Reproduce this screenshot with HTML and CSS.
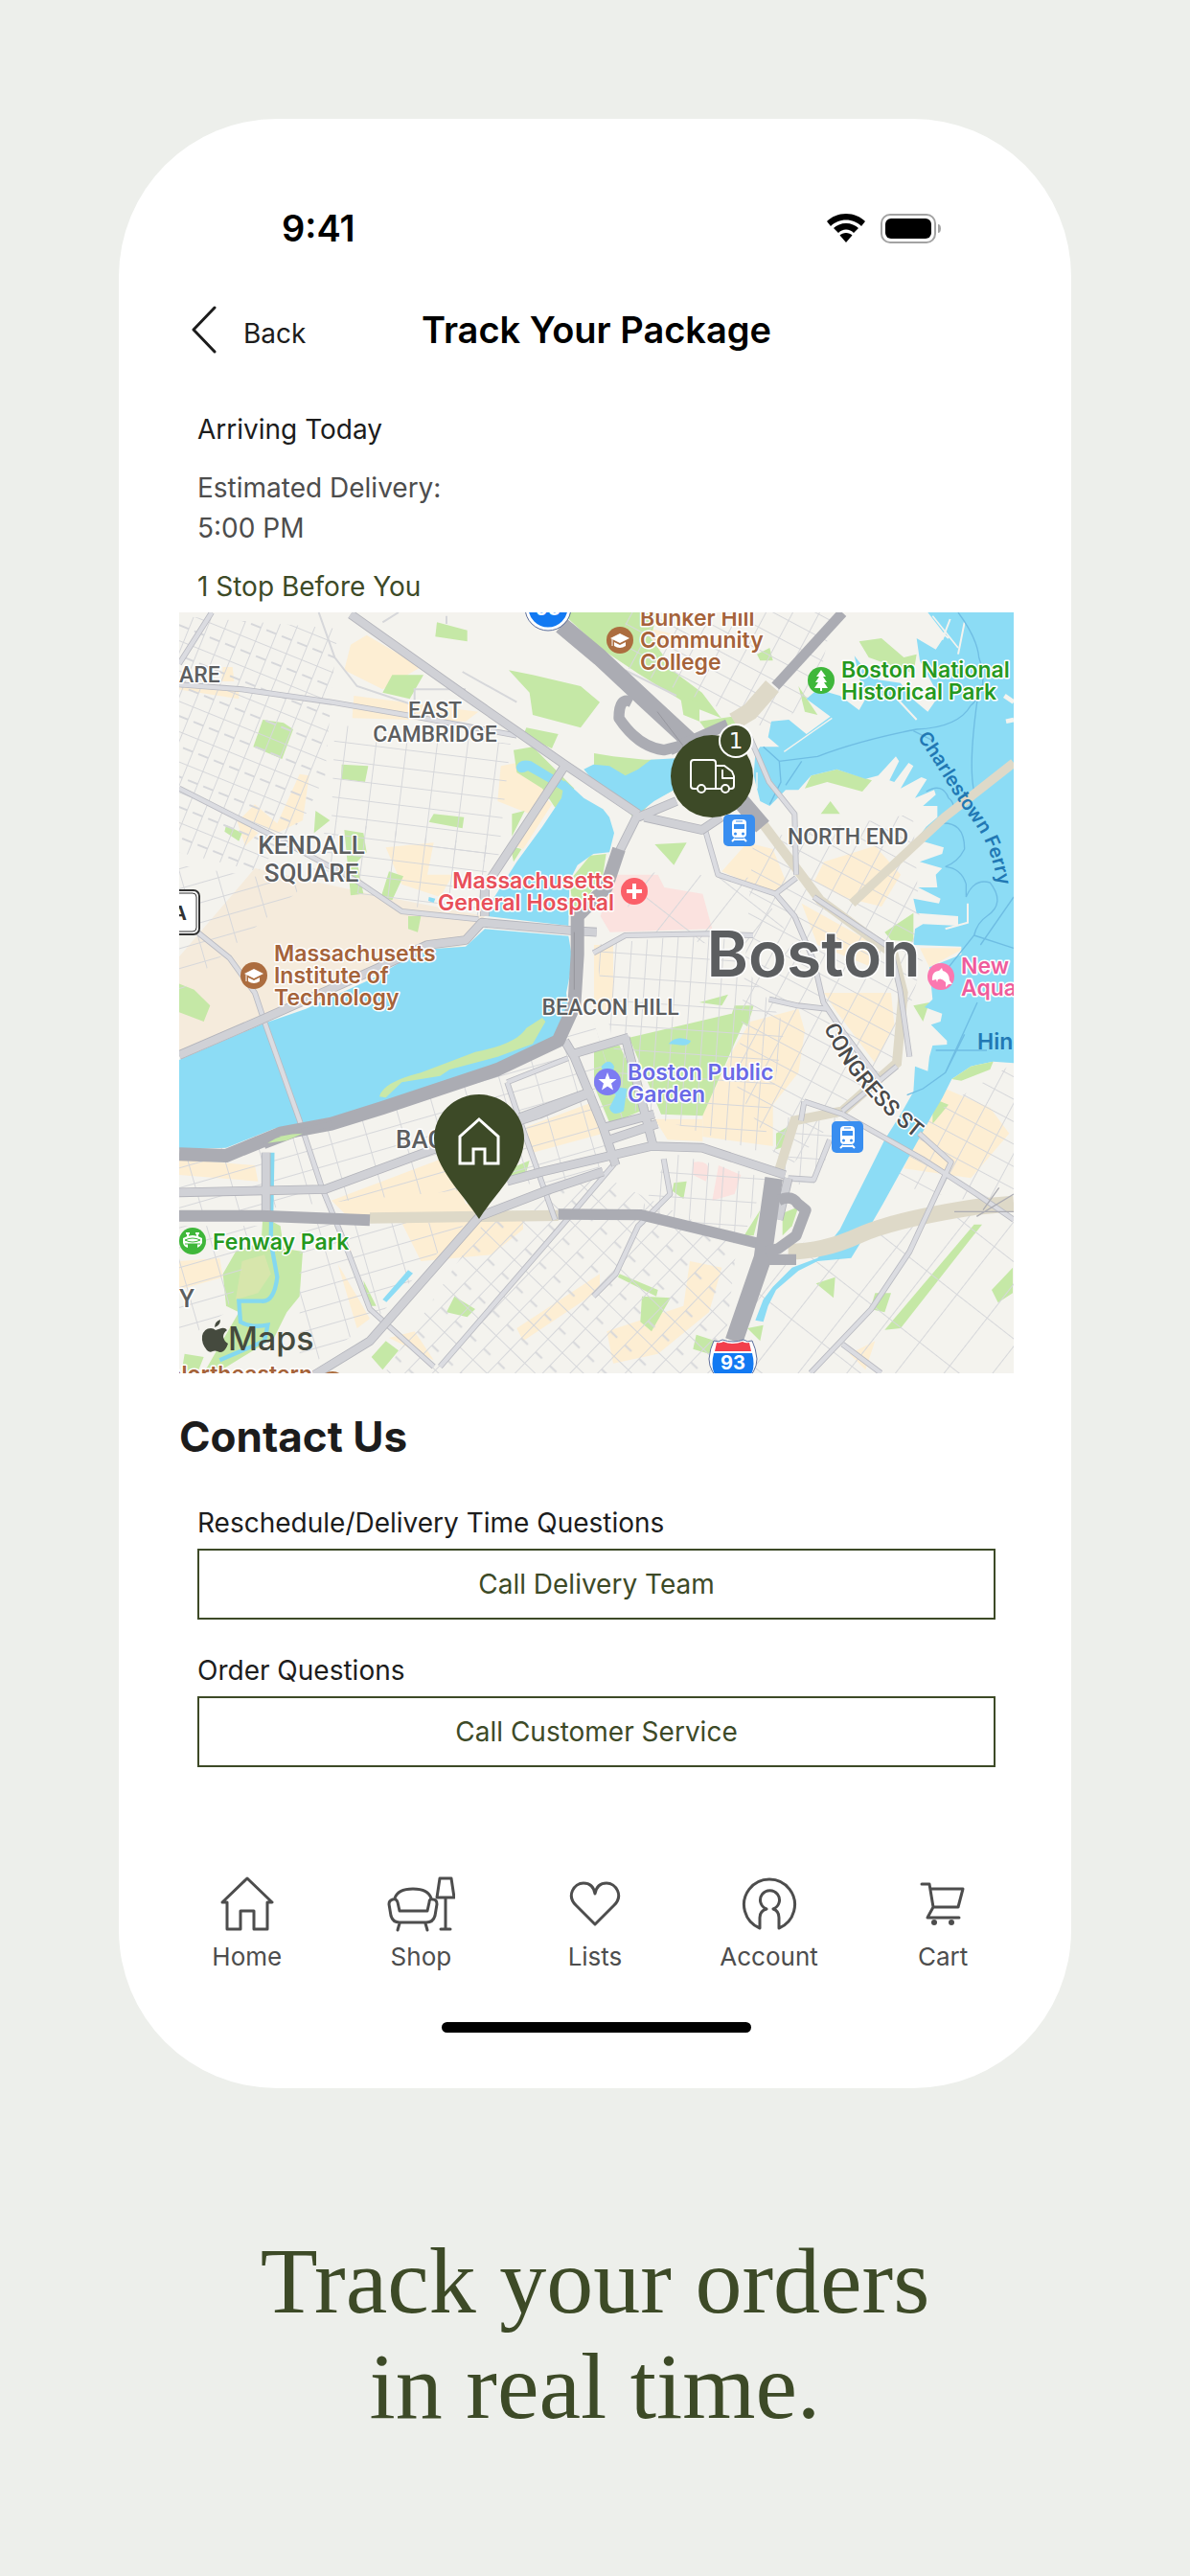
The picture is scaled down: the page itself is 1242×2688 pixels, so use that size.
FILE: index.html
```html
<!DOCTYPE html>
<html lang="en">
<head>
    <meta charset="UTF-8">
    <meta name="viewport" content="width=device-width, initial-scale=1">
    <title>Track Your Package</title>
    <link rel="stylesheet" href="styles.css">
</head>
<body>
    <div class="phone">
        <div class="status">
            <span class="time">9:41</span>
            <div class="status-icons">
                <svg width="40" height="30" viewBox="0 0 40 30">
                    <path d="M20 0C12 0 5 3 0 8l4 5c4-4 10-6.500 16-6.500S32 9 36 13l4-5C35 3 28 0 20 0z"/>
                    <path d="M20 10c-5 0-10 2-13 5l5 5c2-2 5-3.500 8-3.500s6 1.500 8 3.500l5-5c-3-3-8-5-13-5z"/>
                    <path d="M20 20c-2.500 0-5 1-6.500 2.500L20 30l6.500-7.500C25 21 22.500 20 20 20z"/>
                </svg>
                <svg width="64" height="31" viewBox="0 0 64 31">
                    <rect x="1" y="1" width="56" height="29" rx="9" fill="#fff" stroke="#a3a3a3" stroke-width="2"/>
                    <rect x="5" y="5" width="48" height="21" rx="6"/>
                    <path d="M60 11c2 0 3 2 3 4.500S62 20 60 20z" fill="#a3a3a3"/>
                </svg>
            </div>
        </div>

        <header class="header">
            <a class="back" href="#">
                <svg width="26" height="50" viewBox="0 0 26 50"><path d="M24 2L2 25l22 23" fill="none" stroke="#1c1c1c" stroke-width="3" stroke-linecap="round" stroke-linejoin="round"/></svg>
                <span>Back</span>
            </a>
            <h1>Track Your Package</h1>
        </header>

        <div class="delivery">
            <p class="arriving">Arriving Today</p>
            <p class="estimate">Estimated Delivery:<br>5:00 PM</p>
            <p class="stops">1 Stop Before You</p>
        </div>

        <svg class="map" viewBox="0 0 871 794">
            <defs>
                <pattern id="gridA" width="95" height="58" patternUnits="userSpaceOnUse" patternTransform="rotate(7)"><path d="M0 0H95M0 0V58" class="street"/></pattern>
                <pattern id="gridB" width="52" height="88" patternUnits="userSpaceOnUse" patternTransform="rotate(22)"><path d="M0 0H52M0 0V88M20 44H52" class="street"/></pattern>
                <pattern id="gridC" width="112" height="60" patternUnits="userSpaceOnUse" patternTransform="rotate(-16)"><path d="M0 0H112M0 0V60" class="street"/></pattern>
                <pattern id="gridD" width="105" height="62" patternUnits="userSpaceOnUse" patternTransform="rotate(-46)"><path d="M0 0H105M0 0V62M50 0V30" class="street"/></pattern>
                <pattern id="gridE" width="74" height="62" patternUnits="userSpaceOnUse" patternTransform="rotate(28)"><path d="M0 0H74M0 0V62" class="street"/></pattern>
                <pattern id="gridF" width="190" height="120" patternUnits="userSpaceOnUse" patternTransform="rotate(-52)"><path d="M0 0H190M0 0V120" class="street"/></pattern>
                <pattern id="gridG" width="48" height="75" patternUnits="userSpaceOnUse" patternTransform="rotate(4)"><path d="M0 0H48M0 0V75" class="street"/></pattern>
                <path id="ferry" d="M770 130C797 168 808 192 830 220C845 241 851 263 857 298"/>
                <path id="congress" d="M673 433C688 470 724 516 775 554"/>
                <g id="cap">
                    <circle r="14" fill="#ac6d3f"/>
                    <path d="M-10 -2L0 -7 10 -2 0 3z" fill="#fff"/>
                    <path d="M-6 2v4q6 4 12 0V2L0 5z" fill="#fff"/>
                    <path d="M-8 -1v7" stroke="#fff" fill="none"/>
                </g>
                <g id="train">
                    <rect width="33" height="33" rx="5" fill="#398ef0"/>
                    <rect x="9" y="5" width="15" height="19" rx="4" fill="#fff"/>
                    <path d="M11 10h11v5H11z" fill="#398ef0"/>
                    <path d="M13 7h7" stroke="#398ef0"/>
                    <circle cx="12.500" cy="20" r="1.500" fill="#398ef0"/>
                    <circle cx="20.500" cy="20" r="1.500" fill="#398ef0"/>
                    <path d="M12 25l-3 3M21 25l3 3M12 26h9" stroke="#fff" stroke-width="2"/>
                </g>
            </defs>

            <g transform="translate(-1 -3) scale(0.333333)">
                <rect x="0" y="0" width="2630" height="2410" fill="#f4f3ee"/>

                <!-- built-up areas -->
                <g class="built">
                    <path d="M590 80L760 180 640 250 520 190 540 110z"/>
                    <path d="M0 225L190 250V280L0 250zM140 180L170 180 175 225 135 225z"/>
                    <path d="M550 270L940 320 900 350 545 340z"/>
                    <path d="M1010 490L1060 480 1160 540 1100 640 1000 600z"/>
                    <path d="M1150 590L1170 610 1080 750 1055 740z"/>
                    <path d="M380 515L410 520 390 660 310 700 200 650 240 610 310 670z"/>
                    <path d="M650 745L800 730 780 830 860 830 820 900 700 860z"/>
                    <path d="M0 1090L240 810 600 890 960 960 900 1050 600 1130 0 1400z" fill="#f5ebdc"/>
                    <path d="M180 650L250 700 210 740z"/>
                    <path d="M0 1720L240 1740 250 1790 0 1770z"/>
                    <path d="M0 2040L130 2030 140 2090 0 2130z"/>
                    <path d="M480 1850L850 1710 900 1860 1080 1900 1080 1940 980 2020 760 2040 700 1920 520 1890z"/>
                    <path d="M1090 1620L1290 1545 1330 1640 1110 1700z"/>
                    <path d="M500 2050L560 2150 600 2220 560 2250z"/>
                    <path d="M660 2280L740 2260 800 2350z"/>
                    <path d="M1060 2250L1320 2080V2130L1080 2290z"/>
                </g>
                <g class="built" transform="translate(1302 0)">
                    <path d="M480 730L560 750 600 850 560 890 400 820z"/>
                    <path d="M720 790L880 740 960 830 900 930 780 900 690 850z"/>
                    <path d="M0 1050H60V1250L0 1260zM650 920L900 1060 870 1120 700 1050z"/>
                    <path d="M490 1290L640 1250 660 1320 640 1450 560 1550 560 1680 340 1650 340 1580 440 1370z"/>
                    <path d="M720 1200H930L940 1300 880 1420 760 1260z"/>
                    <path d="M1100 1500L1240 1560 1300 1640 1180 1780 970 1750 1020 1630z"/>
                    <path d="M190 1595H340V1665L230 1660z"/>
                    <path d="M40 2260L280 2180 300 2040 400 2060 360 2200 200 2330 60 2360z"/>
                    <path d="M1020 1060L1160 1060 1050 1120zM140 50L300 90 200 130z"/>
                    <path d="M800 2330L880 2290 850 2380z"/>
                </g>
                <g fill="#fbe2df" transform="translate(1302 0)">
                    <path d="M60 830L200 830 220 870 340 890 370 1000 50 1010 20 960z"/>
                    <path d="M310 1730Q380 1720 350 1790L310 1770zM390 1740L460 1770 440 1830 370 1850z"/>
                </g>

                <!-- parks -->
                <g class="park">
                    <path d="M265 345L330 355 360 375 325 468 235 430z"/>
                    <path d="M512 485L595 490 585 540 510 530z"/>
                    <path d="M670 205H768L725 280 640 260z"/>
                    <path d="M1035 190L1110 205 1260 240 1320 290 1260 370 1110 330 1100 260z"/>
                    <path d="M1090 370L1190 390 1170 435 1080 395z"/>
                    <path d="M1050 440L1110 430 1240 560 1180 620 1140 560 1060 510z"/>
                    <path d="M810 40L905 65V100L805 85z"/>
                    <path d="M1200 9H1500L1480 90 1560 200 1640 260 1700 340 1600 300 1440 200 1320 120z"/>
                    <path d="M800 640L895 650 890 685 785 665z"/>
                    <path d="M430 630L475 660 425 700zM520 690L580 700 590 760 560 790 580 890 540 895z"/>
                    <path d="M660 820L705 835 670 910 635 900zM720 960L760 960 750 1010 720 1000z"/>
                    <path d="M150 675L200 700 190 725 145 695zM0 1170L50 1190 100 1240 80 1290 0 1260z"/>
                    <path d="M1045 640L1085 630 1045 710zM1040 740L1075 750 1050 790z"/>
                    <path d="M1225 850L1290 770 1340 765 1330 830 1240 960z"/>
                    <path d="M1180 1270L1210 1290 1160 1370 1010 1420 1080 1360z"/>
                    <path d="M265 1900L320 1930 330 2000 390 2010 380 2150 340 2200 300 2280 120 2390 80 2390 190 2200 150 2180 140 2080 180 2010 260 1980z"/>
                    <path d="M20 2330L80 2340 60 2390 10 2390zM580 2100L620 2180 590 2180z"/>
                    <path d="M865 2150L930 2190 905 2215 840 2200zM650 2290L690 2320 640 2380 605 2340z"/>
                    <path d="M1040 1750L1100 1725 1090 1760 1030 1785z"/>
                </g>
                <path d="M200 2040L270 2020 290 2080 250 2140 180 2160z" fill="#d7e6ac"/>
                <g class="park" transform="translate(1302 0)">
                    <path d="M110 1340L430 1265 470 1290 340 1585 210 1580z"/>
                    <path d="M0 1370L80 1365 170 1560 50 1610 0 1490z"/>
                    <path d="M440 1240L500 1240 480 1305 430 1270zM330 1230L420 1205 400 1240z"/>
                    <path d="M680 520L760 500 870 535 840 570 730 540 660 560z"/>
                    <path d="M740 600L770 640 710 640zM910 1010L1000 950V1040L930 1035z"/>
                    <path d="M0 450L60 460 160 470 250 470 260 560 180 600 130 660 0 500z"/>
                    <path d="M190 735L290 730 250 800zM510 140L550 120 560 160 520 160z"/>
                    <path d="M270 270L330 290 330 350 280 330zM330 350L470 330 440 380 360 390z"/>
                    <path d="M830 100L900 90 970 150 1010 140 1000 200 860 150z"/>
                    <path d="M660 320L640 240 700 330z"/>
                    <path d="M570 1640L640 1600 600 1680 570 1690zM470 1960L520 1880 500 1960z"/>
                    <path d="M590 1890L640 1870 620 1930 590 1960z"/>
                    <path d="M250 1795L290 1790 280 1845 245 1820zM150 2150L240 2155 180 2260 145 2230z"/>
                    <path d="M320 2270L380 2290 360 2330 310 2315zM80 2080L200 2130 195 2150 75 2090z"/>
                    <path d="M695 2110L755 2090 750 2155zM880 2140L930 2140 910 2200 865 2190z"/>
                    <path d="M910 2255L1190 1925 1215 1925 960 2250z"/>
                    <path d="M1311 2060L1245 2130 1265 2170 1311 2140zM480 2250L530 2240 520 2290z"/>
                    <path d="M1000 1240L1050 1230 1030 1290zM1060 1530L1110 1550 1060 1610z"/>
                </g>

                <!-- side streets -->
                <path d="M490 360L1040 420 1000 800 480 660z" fill="url(#gridA)"/>
                <path d="M0 20L500 60 480 260 460 520 400 640 250 820 0 760z" fill="url(#gridB)"/>
                <path d="M480 660L980 740 940 960 600 910 400 800z" fill="url(#gridA)"/>
                <path d="M0 800L400 860 0 1200z" fill="url(#gridC)"/>
                <path d="M0 1720L1300 1290 1400 1600 1300 1780 0 1900z" fill="url(#gridC)"/>
                <path d="M0 1930L250 1930 150 2200 0 2300z" fill="url(#gridC)"/>
                <path d="M380 1920L900 1920 620 2220 380 2390z" fill="url(#gridC)"/>
                <path d="M950 1930L1300 1760 1750 1980 1700 2400 640 2400z" fill="url(#gridD)"/>
                <path d="M1300 1050L1700 1010 1900 1300 1830 1700 1400 1560z" fill="url(#gridG)"/>
                <path d="M1800 720L2300 640 2330 1100 2250 1400 1900 1760 1750 1500z" fill="url(#gridE)"/>
                <path d="M1420 820L1800 840 1960 1100 1400 1000z" fill="url(#gridF)"/>
                <path d="M1400 9L2050 9 2000 260 1860 380 1400 180z" fill="url(#gridE)"/>
                <path d="M1880 1590H2090L1990 1800H1880z" fill="url(#gridG)"/>
                <path d="M2330 1600L2616 1420V1880L2240 1800z" fill="url(#gridE)"/>
                <path d="M1990 1950L2616 1880V2400H1700L1760 2180z" fill="url(#gridF)"/>
                <path d="M1540 1700L1840 1780 1760 1990 1440 1900z" fill="url(#gridG)"/>
                <path d="M440 9L490 150 560 240 740 300M690 9L640 40M840 20V45M890 195L1060 290M740 290V250H900M780 300V345M1560 270L1400 190" class="street"/>

                <!-- water -->
                <g class="water">
                    <path d="M1210 535L1270 590 1330 625 1350 650 1365 700 1350 760 1300 765 1250 800 1225 850 1222 990 965 960 990 900 1060 790 1140 680 1200 590z"/>
                    <path d="M1270 500L1300 485 1350 490 1400 520 1440 500 1480 470 1570 465 1600 520 1560 560 1490 600 1440 640 1400 600 1320 560z"/>
                    <path d="M1058 495Q1065 465 1105 475L1220 545 1210 570 1095 505Q1065 520 1058 495z"/>
                    <path d="M3 1410L270 1295 400 1250 620 1150 760 1065 900 1055 960 1000 1222 1022 1235 1100 1215 1200 1225 1290 1165 1365 1000 1425 640 1545 480 1590 300 1625 150 1685 3 1690z"/>
                    <path d="M720 2068L735 2078 652 2168 640 2160zM785 900L805 905 800 918 783 912z"/>
                    <path d="M1535 1360Q1560 1330 1605 1350 1600 1370 1560 1362zM1325 1430Q1350 1400 1365 1430L1355 1490 1405 1500 1395 1570Q1360 1590 1350 1560L1370 1520 1340 1490z"/>
                </g>
                <path d="M295 1700L290 1980 310 2090Q300 2170 260 2165L190 2165 195 2230Q230 2250 280 2240L270 2290 130 2350" fill="none" stroke="#84d8f0" stroke-width="13"/>
                <path d="M630 1525Q640 1480 760 1450L930 1385Q1060 1360 1090 1310L1140 1278 1150 1290 1110 1360 1000 1400 850 1440 820 1460 700 1480 650 1528z" fill="#c9e8a8"/>
                <g class="water" transform="translate(1302 0)">
                    <path d="M1045 9L1100 80 1070 125 1010 90 1020 160 1080 270 1045 320 985 270 960 230 890 220 835 170 815 145 835 230 850 280 830 315 770 270 700 250 665 280 740 335 665 390 610 345 555 350 545 400 580 430 520 430 505 450 500 520 520 600 550 615 600 565 640 565 680 520 760 500 850 530 890 520 945 460 955 475 925 535 940 540 985 480 1000 490 960 560 1025 525 1042 532 1005 590 1065 565 1070 580 1030 615 1075 615 1075 650 1040 680 1010 720 1095 745 1090 765 1020 790 1090 810 1070 830 1075 870 1015 870 1085 905 1080 920 1000 905 1010 950 1140 960 1140 990 1030 985 1005 1000 1000 1050 1150 1055 1150 1080 1050 1120 1060 1220 1035 1245 1090 1265 1085 1290 1055 1300 1105 1350 1105 1362 1060 1365 1050 1400 1045 1445 1005 1430 1000 1510 960 1580 910 1660 860 1760 790 1900 770 1940 700 2030 620 2060 560 2120 530 2160 505 2225 530 2230 545 2180 570 2130 640 2070 700 2040 805 2030 830 1990 905 1860 960 1760 1010 1670 1060 1580 1090 1530 1120 1470 1180 1430 1250 1415 1314 1420V9z"/>
                </g>
                <path d="M1120 1470L1180 1430 1250 1415 1240 1440 1150 1475z" fill="#c5e8a6" transform="translate(1302 0)"/>
                <!-- piers -->
                <g fill="none" stroke="#f4f3ee" transform="translate(1302 0)">
                    <path d="M1040 30L1110 90M1060 20L1140 120" stroke-width="5"/>
                    <path d="M1115 30L1090 95M1160 40L1140 140M940 270L1010 345M1170 920V980L1100 1000" stroke-width="6"/>
                    <path d="M595 445L745 340M510 510V560M980 1375L960 1450" stroke-width="4"/>
                    <path d="M1290 350L1314 345M1285 270L1314 290" stroke-width="14"/>
                </g>
                <!-- ferry routes -->
                <g fill="none" stroke="#6fbde3" stroke-width="4" transform="translate(1302 0)">
                    <path d="M1140 9Q1200 90 1205 150 1240 250 1180 300 1140 370 1010 375 830 410 700 460L580 475 530 430M580 475L585 540 550 610M650 475L600 550M1205 250Q1170 480 1190 570"/>
                    <path d="M1000 380L1060 410M1040 570Q1090 540 1110 590 1150 620 1080 670 1160 660 1160 750 1140 790 1100 805 1150 810 1165 860L1165 900Q1190 840 1240 855 1290 920 1230 960 1200 980 1190 1020L1110 1120M1210 1050L1314 900M1190 1020L1314 1060M1200 1230L1100 1450 1030 1500 980 1520M1070 1380H1230M1100 1450L1160 1330"/>
                </g>

                <!-- tunnels -->
                <g fill="none" stroke="#ded9c8" stroke-width="34">
                    <path d="M600 1905L943 1900 1190 1897"/>
                    <path d="M1860 240L1790 320 1740 350" stroke-width="55"/>
                    <path d="M1830 670L1920 790 2010 910 2240 1080 2270 1200 2250 1420 2080 1570 1930 1600 1880 1760" stroke-width="30"/>
                    <path d="M2110 920L2400 650 2616 480" stroke-width="28"/>
                    <path d="M1910 2010Q2020 2010 2130 1960T2500 1870L2616 1860" stroke-width="50"/>
                </g>

                <!-- secondary roads -->
                <g class="road-edge">
                    <path d="M3 235L200 250 480 290 740 335 1060 395M3 560L280 700 560 850 700 945 940 970"/>
                    <path d="M105 9L3 170M60 1010L160 1090 240 1200 270 1290 380 1600 450 1810 520 1980 600 2190 800 2370"/>
                    <path d="M1790 400L1850 540 1930 640 1935 830M1990 900L2230 1060 2260 1190 2290 1400M1300 1075L1400 1020 1660 1015 1800 1020M1650 690L1690 830 1870 890 1935 840"/>
                    <path d="M1870 890L1930 960 1990 1100 2020 1230 2080 1320 2200 1480M1960 1540L2080 1580 2330 1720 2500 1830 2616 1910M1960 1540L1950 1600M2080 1570L2250 1430M2320 1640L2420 1730 2290 2010 2170 2190 1980 2390"/>
                    <path d="M1850 1220L1940 1240 2030 1250M1910 1780L1990 1785 2040 1660M1520 1720L1540 1830 1440 1930 1370 2080 1300 2150M2080 2300L2200 2390"/>
                    <path d="M1030 1480L1070 1600 1180 1910M1030 1480L1220 1405M820 2370L1200 1930 1370 1730"/>
                </g>
                <g class="road">
                    <path d="M3 235L200 250 480 290 740 335 1060 395M3 560L280 700 560 850 700 945 940 970"/>
                    <path d="M105 9L3 170M60 1010L160 1090 240 1200 270 1290 380 1600 450 1810 520 1980 600 2190 800 2370"/>
                    <path d="M1790 400L1850 540 1930 640 1935 830M1990 900L2230 1060 2260 1190 2290 1400M1300 1075L1400 1020 1660 1015 1800 1020M1650 690L1690 830 1870 890 1935 840"/>
                    <path d="M1870 890L1930 960 1990 1100 2020 1230 2080 1320 2200 1480M1960 1540L2080 1580 2330 1720 2500 1830 2616 1910M1960 1540L1950 1600M2080 1570L2250 1430M2320 1640L2420 1730 2290 2010 2170 2190 1980 2390"/>
                    <path d="M1850 1220L1940 1240 2030 1250M1910 1780L1990 1785 2040 1660M1520 1720L1540 1830 1440 1930 1370 2080 1300 2150M2080 2300L2200 2390"/>
                    <path d="M1030 1480L1070 1600 1180 1910M1030 1480L1220 1405M820 2370L1200 1930 1370 1730"/>
                </g>

                <!-- main roads -->
                <g class="main-edge">
                    <path d="M3 1395L270 1280 620 1125 780 1050 900 1035 950 980 1230 1005 1310 1010M960 960V870L1210 490M3 1825L460 1815 800 1690 1130 1580 1300 1510"/>
                    <path d="M420 2400L600 2290 943 1900 1150 1820 1330 1760M1030 1790L1140 1760 1480 1680 1640 1685 1900 1770M1210 1350L1240 1400 1330 1620 1370 1740M1400 1340L1490 1690M1240 1390L1410 1340M1340 1620L1490 1580M1350 1660L1500 1610M1440 640L1370 780M1440 650L1560 600M1460 650L1640 690 1700 650"/>
                    <path d="M540 15L900 270 1210 485 1440 640M1070 1590L1290 1510M275 1700V1900M1880 1910L1910 1780"/>
                </g>
                <g class="main">
                    <path d="M3 1395L270 1280 620 1125 780 1050 900 1035 950 980 1230 1005 1310 1010M960 960V870L1210 490M3 1825L460 1815 800 1690 1130 1580 1300 1510"/>
                    <path d="M420 2400L600 2290 943 1900 1150 1820 1330 1760M1030 1790L1140 1760 1480 1680 1640 1685 1900 1770M1210 1350L1240 1400 1330 1620 1370 1740M1400 1340L1490 1690M1240 1390L1410 1340M1340 1620L1490 1580M1350 1660L1500 1610M1440 640L1370 780M1440 650L1560 600M1460 650L1640 690 1700 650"/>
                    <path d="M540 15L900 270 1210 485 1440 640M1070 1590L1290 1510M275 1700V1900M1880 1910L1910 1780"/>
                </g>

                <!-- highways -->
                <g class="highway">
                    <path d="M1200 50L1320 150 1470 290 1600 410 1830 680" stroke-width="54"/>
                    <path d="M2080 10L1870 240" stroke-width="32"/>
                    <path d="M1420 290Q1380 270 1380 340 1440 430 1520 440L1580 425M1540 440L1720 360" stroke-width="34"/>
                    <path d="M1380 750L1340 870 1250 960 1250 1080 1240 1240 1190 1350 1000 1440 640 1560 480 1610 320 1640 150 1710 3 1705" stroke-width="42"/>
                    <path d="M270 1680L400 1630 480 1610" stroke-width="18"/>
                    <path d="M3 1898H260L600 1912" stroke-width="36"/>
                    <path d="M1190 1893L1450 1895 1820 1985" stroke-width="34"/>
                    <path d="M1865 1780L1830 2030 1740 2290" stroke-width="56"/>
                    <path d="M1880 1850Q1920 1830 1940 1860L1965 1880 1935 1960 1880 2000 1840 2010M1850 2035L1935 2035" stroke-width="34"/>
                </g>
                <path d="M280 1670Q320 1640 390 1640L340 1662z" fill="#c5e8a6"/>
                <path d="M1240 1010V1190M1580 425L1500 320" stroke="#96969d" stroke-width="3" fill="none"/>
                <path d="M2430 1885H2616M2500 1900L2616 1830M2520 1880L2570 1810" stroke="#adadb3" stroke-width="4" fill="none"/>
            </g>

            <!-- area names -->
            <g class="area">
                <text x="0" y="73">ARE</text>
                <text x="267" y="110" text-anchor="middle">EAST</text>
                <text x="267" y="135" text-anchor="middle">CAMBRIDGE</text>
                <text x="698" y="242" text-anchor="middle">NORTH END</text>
                <text x="450" y="420" text-anchor="middle">BEACON HILL</text>
            </g>
            <g class="area area-big">
                <text x="138" y="252" text-anchor="middle">KENDALL</text>
                <text x="138" y="281" text-anchor="middle">SQUARE</text>
                <text x="226" y="559">BACK</text>
                <text x="0" y="725">Y</text>
            </g>
            <text class="city" x="662" y="380" text-anchor="middle">Boston</text>

            <!-- places -->
            <g class="place school">
                <text x="481" y="14">Bunker Hill</text>
                <text x="481" y="37">Community</text>
                <text x="481" y="60">College</text>
                <text x="99" y="364">Massachusetts</text>
                <text x="99" y="387">Institute of</text>
                <text x="99" y="410">Technology</text>
                <text x="139" y="803" text-anchor="end">Northeastern</text>
            </g>
            <use href="#cap" x="460" y="29"/>
            <use href="#cap" x="78" y="379"/>
            <use href="#cap" x="160" y="806"/>
            <g class="place green">
                <text x="691" y="68">Boston National</text>
                <text x="691" y="91">Historical Park</text>
                <text x="35" y="665">Fenway Park</text>
            </g>
            <circle cx="670" cy="71" r="14" fill="#3fb73a"/>
            <path d="M670 60l5 7h-3l4 6h-3l4 6h-6v3h-2v-3h-6l4-6h-3l4-6h-3z" fill="#fff"/>
            <circle cx="14" cy="656" r="14" fill="#3fb73a"/>
            <path d="M4 653q10-6 20 0v5q-2 4-5 5v-4h-10v4q-4-1-5-5z" fill="#fff"/>
            <path d="M9 652v-5M19 652v-5M7 648h4M17 648h4" stroke="#fff" stroke-width="2"/>
            <path d="M6 655q8 4 16 0q-8-4-16 0M6 659h16" stroke="#3fb73a" fill="none"/>
            <g class="place hospital">
                <text x="454" y="288" text-anchor="end">Massachusetts</text>
                <text x="454" y="311" text-anchor="end">General Hospital</text>
            </g>
            <circle cx="475" cy="291" r="14" fill="#fb5f68"/>
            <path d="M475 283v16M467 291h16" stroke="#fff" stroke-width="4"/>
            <g class="place garden">
                <text x="468" y="488">Boston Public</text>
                <text x="468" y="511">Garden</text>
            </g>
            <circle cx="447" cy="490" r="14" fill="#7d7bf2"/>
            <path d="M447 480l2.500 7h7l-5.500 4.500 2 7-6-4-6 4 2-7-5.500-4.500h7z" fill="#fff"/>
            <g class="place pink">
                <text x="816" y="377">New</text>
                <text x="816" y="400">Aqua</text>
            </g>
            <circle cx="795" cy="380" r="14" fill="#fb78b0"/>
            <path d="M786 384q-1-9 7-10l3-3 1 3q7 2 7 10l3 4h-4l-3 3v-5q-4-5-8-3l-1 3-1-3z" fill="#fff"/>
            <g class="place sea">
                <text x="833" y="456">Hing</text>
                <text class="ferry-name"><textPath href="#ferry">Charlestown Ferry</textPath></text>
            </g>
            <text class="road-name"><textPath href="#congress">CONGRESS ST</textPath></text>
            <use href="#train" x="568" y="211"/>
            <use href="#train" x="681" y="531"/>

            <!-- route shields -->
            <circle cx="385" cy="-5" r="22" fill="#1279f2" stroke="#fff" stroke-width="3"/>
            <circle cx="385" cy="-5" r="24" fill="none" stroke="#5d6f9c"/>
            <text class="shield-text" x="385" y="3" text-anchor="middle">93</text>
            <path d="M558 760q5 2 9-1 11 4 22 0 4 3 9 1 4 8 5 19 0 14-15 26h-20q-15-12-15-26 1-11 5-19z" fill="#fff" stroke="#5d6f9c"/>
            <path d="M559 771h38l-2-9q-4 1-7-1-10 4-20 0-3 2-7 1z" fill="#f23f4d"/>
            <path d="M558 773h40q3 12 0 20l-8 12h-24l-8-12q-3-8 0-20z" fill="#1279f2"/>
            <text class="shield-text" x="578" y="790" text-anchor="middle">93</text>
            <rect x="-20" y="290" width="41" height="46" rx="6" fill="#fff" stroke="#333" stroke-width="2"/>
            <rect x="-20" y="293" width="38" height="40" rx="4" fill="none" stroke="#333"/>
            <text class="route" x="-7" y="321">A</text>

            <!-- attribution -->
            <path d="M40 746q-4 3-4 7 1 5 5 7-2 6-5 8-3 2-6 0-3-1-5 0-3 2-6-1-6-7-5-15 2-8 9-8 3 0 5 2 3-1 6-2 4-1 6 2zM27 743q0-6 6-8 0 6-6 8z" fill="#454a3e" transform="translate(10 3)"/>
            <text class="brand" x="51" y="770">Maps</text>

            <!-- truck marker -->
            <circle cx="556" cy="171" r="43" fill="#3d4a27"/>
            <g fill="none" stroke="#fff" stroke-width="2" stroke-linejoin="round">
                <path d="M540 184h-3q-3 0-3-3v-24q0-3 3-3h20q3 0 3 3v27h-11M560 160h9l8 6 2 5v10q0 3-3 3h-2M560 184h6"/>
                <path d="M567 164v9h12"/>
                <circle cx="545" cy="184" r="4"/>
                <circle cx="570" cy="184" r="4"/>
                <circle cx="581" cy="134" r="17" fill="#3d4a27"/>
            </g>
            <text class="badge" x="581" y="142" text-anchor="middle">1</text>

            <!-- home marker -->
            <path d="M313 633C296 606 266 580 266 549a47 46 0 0 1 94 0C360 580 330 606 313 633z" fill="#3d4a27"/>
            <path d="M313 529l20 18v28h-14v-15h-12v15h-14v-28z" fill="none" stroke="#fff" stroke-width="3"/>
        </svg>

        <section class="contact">
            <h2>Contact Us</h2>
            <div class="contact-item">
                <p id="delivery-label">Reschedule/Delivery Time Questions</p>
                <button type="button" aria-describedby="delivery-label">Call Delivery Team</button>
            </div>
            <div class="contact-item">
                <p id="order-label">Order Questions</p>
                <button type="button" aria-describedby="order-label">Call Customer Service</button>
            </div>
        </section>

        <nav class="tabs">
            <a href="#">
                <svg width="56" height="58" viewBox="0 0 56 58"><path d="M7 27H2L28 2l26 25h-5v28H35V36H21v19H7z"/></svg>
                Home
            </a>
            <a href="#">
                <svg width="72" height="58" viewBox="0 0 72 58">
                    <path d="M9 23Q12 13 28 13t19 10M14 36L12 27q-1-4-5-3-4 1-4 5l2 12q2 7 9 7h28q7 0 9-7l2-12q0-5-4-5-4-1-4 3l-2 9zM14 49l-2 7M41 49l2 7"/>
                    <path d="M56 2h12l3 20H53zM62 22v33M57 55h10"/>
                </svg>
                Shop
            </a>
            <a href="#">
                <svg width="56" height="58" viewBox="0 0 56 58"><path d="M28 50L8 30C-2 20 6 7 16 7q10 0 12 11Q30 7 40 7c10 0 18 13 8 23z"/></svg>
                Lists
            </a>
            <a href="#">
                <svg width="58" height="58" viewBox="0 0 58 58"><path d="M19 54V43q0-7 7-9a10 10 0 1 1 7 0q6 2 6 9v11A26.500 26.500 0 1 0 19 54z"/></svg>
                Account
            </a>
            <a href="#">
                <svg width="48" height="58" viewBox="0 0 48 58">
                    <path d="M2 8h8l4 24h26l5-19H11M14 32L8 43h33"/>
                    <circle cx="15" cy="48" r="3" class="wheel"/>
                    <circle cx="33" cy="48" r="3" class="wheel"/>
                </svg>
                Cart
            </a>
        </nav>
        <div class="home-bar"></div>
    </div>

    <p class="caption">Track your orders<br>in real time.</p>
</body>
</html>
```

FILE: styles.css
```css
* {
    box-sizing: border-box;
}

body {
    margin: 0;
    padding: 124px;
    background-color: #edefeb;
    font-family: Inter, "Liberation Sans", sans-serif;
    font-size: 28px;
    line-height: 42px;
    color: #1c1c1c;
}

h1, h2, p {
    margin: 0;
}

a {
    color: inherit;
    text-decoration: none;
}

.phone {
    background-color: #fff;
    border-radius: 165px;
    padding: 92px 60px 58px 63px;
}

.status {
    display: flex;
    justify-content: space-between;
    align-items: center;
    padding: 0 75px 0 107px;
    height: 44px;
    color: #000;
}

.time {
    font-size: 38px;
    font-weight: 600;
}

.status-icons {
    display: flex;
    align-items: center;
    gap: 16px;
}

.header {
    display: grid;
    grid-template-columns: 1fr auto 1fr;
    align-items: center;
    padding: 0 13px;
    margin-top: 56px;
}

.back {
    display: flex;
    align-items: flex-end;
    gap: 28px;
}

.header h1 {
    font-size: 38px;
    font-weight: 600;
    line-height: 56px;
    color: #000;
}

.delivery {
    display: flex;
    flex-direction: column;
    gap: 19px;
    padding: 0 19px;
    margin: 55px 0 6px;
}

.estimate {
    color: #4d4d4d;
}

.stops {
    color: #3d4a27;
}

/* map */
.map {
    display: block;
    width: 100%;
    overflow: hidden;
}

.street {
    fill: none;
    stroke: #d6d7da;
    stroke-width: 6;
}

.built {
    fill: #fdeed3;
}

.park {
    fill: #c5e8a6;
}

.water {
    fill: #8cdcf5;
}

.road-edge, .road, .main-edge, .main, .highway {
    fill: none;
    stroke-linejoin: round;
}

.road-edge {
    stroke: #b9bac1;
    stroke-width: 18;
}

.road {
    stroke: #dbdce1;
    stroke-width: 13;
}

.main-edge {
    stroke: #b3b4bb;
    stroke-width: 29;
}

.main {
    stroke: #d0d1d6;
    stroke-width: 24;
}

.highway {
    stroke: #abacb3;
}

.map text {
    paint-order: stroke;
    stroke: #fff;
    stroke-width: 3px;
    stroke-linejoin: round;
}

.area {
    font-family: "Liberation Sans Narrow", Roboto, sans-serif;
    font-size: 23px;
    font-weight: 500;
    fill: #5c5e60;
}

.area-big {
    font-size: 26px;
}

.city {
    font-size: 66px;
    font-weight: 600;
    fill: #5c5e60;
}

.place {
    font-size: 23px;
    font-weight: 600;
}

.school { fill: #a5633a; }
.green { fill: #26991f; }
.hospital { fill: #e8505a; }
.garden { fill: #6a6ae6; }
.pink { fill: #ee5c9c; }
.sea { fill: #2178b4; }

.map .sea text {
    stroke: none;
}

.ferry-name {
    font-size: 20px;
}

.road-name {
    font-family: Roboto, sans-serif;
    font-size: 23px;
    font-weight: 500;
    fill: #4a4a4a;
}

.map .shield-text {
    font-size: 20px;
    font-weight: 700;
    fill: #fff;
    stroke: none;
}

.route {
    font-size: 20px;
    font-weight: 700;
    fill: #333;
}

.map .brand {
    font-size: 34px;
    font-weight: 500;
    fill: #454a3e;
    stroke: none;
}

.map .badge {
    font-family: "DejaVu Sans", sans-serif;
    font-size: 23px;
    fill: #fff;
    stroke: none;
}

/* contact */
.contact h2 {
    font-size: 44px;
    font-weight: 700;
    line-height: 56px;
    margin: 38px 0 41px;
}

.contact-item {
    padding: 0 19px;
    margin-bottom: 32px;
}

.contact-item button {
    display: block;
    width: 100%;
    height: 74px;
    margin-top: 6px;
    background-color: #fff;
    border: 2px solid #3d4a27;
    color: #3d4a27;
    font: inherit;
    cursor: pointer;
}

/* tab bar */
.tabs {
    display: flex;
    margin: 114px -17px 0 -20px;
    font-size: 26px;
    line-height: 40px;
    color: #4d4d4d;
}

.tabs a {
    flex: 1;
    display: flex;
    flex-direction: column;
    align-items: center;
    gap: 6px;
}

.tabs svg {
    fill: none;
    stroke: #4d4d4d;
    stroke-width: 3;
    stroke-linejoin: round;
    stroke-linecap: round;
}

.tabs .wheel {
    fill: #4d4d4d;
    stroke: none;
}

.home-bar {
    width: 323px;
    height: 11px;
    margin: 48px auto 0;
    border-radius: 6px;
    background-color: #000;
}

.caption {
    margin-top: 146px;
    text-align: center;
    font-family: "Liberation Serif", serif;
    font-size: 98px;
    line-height: 110px;
    color: #3d4a27;
}
```
